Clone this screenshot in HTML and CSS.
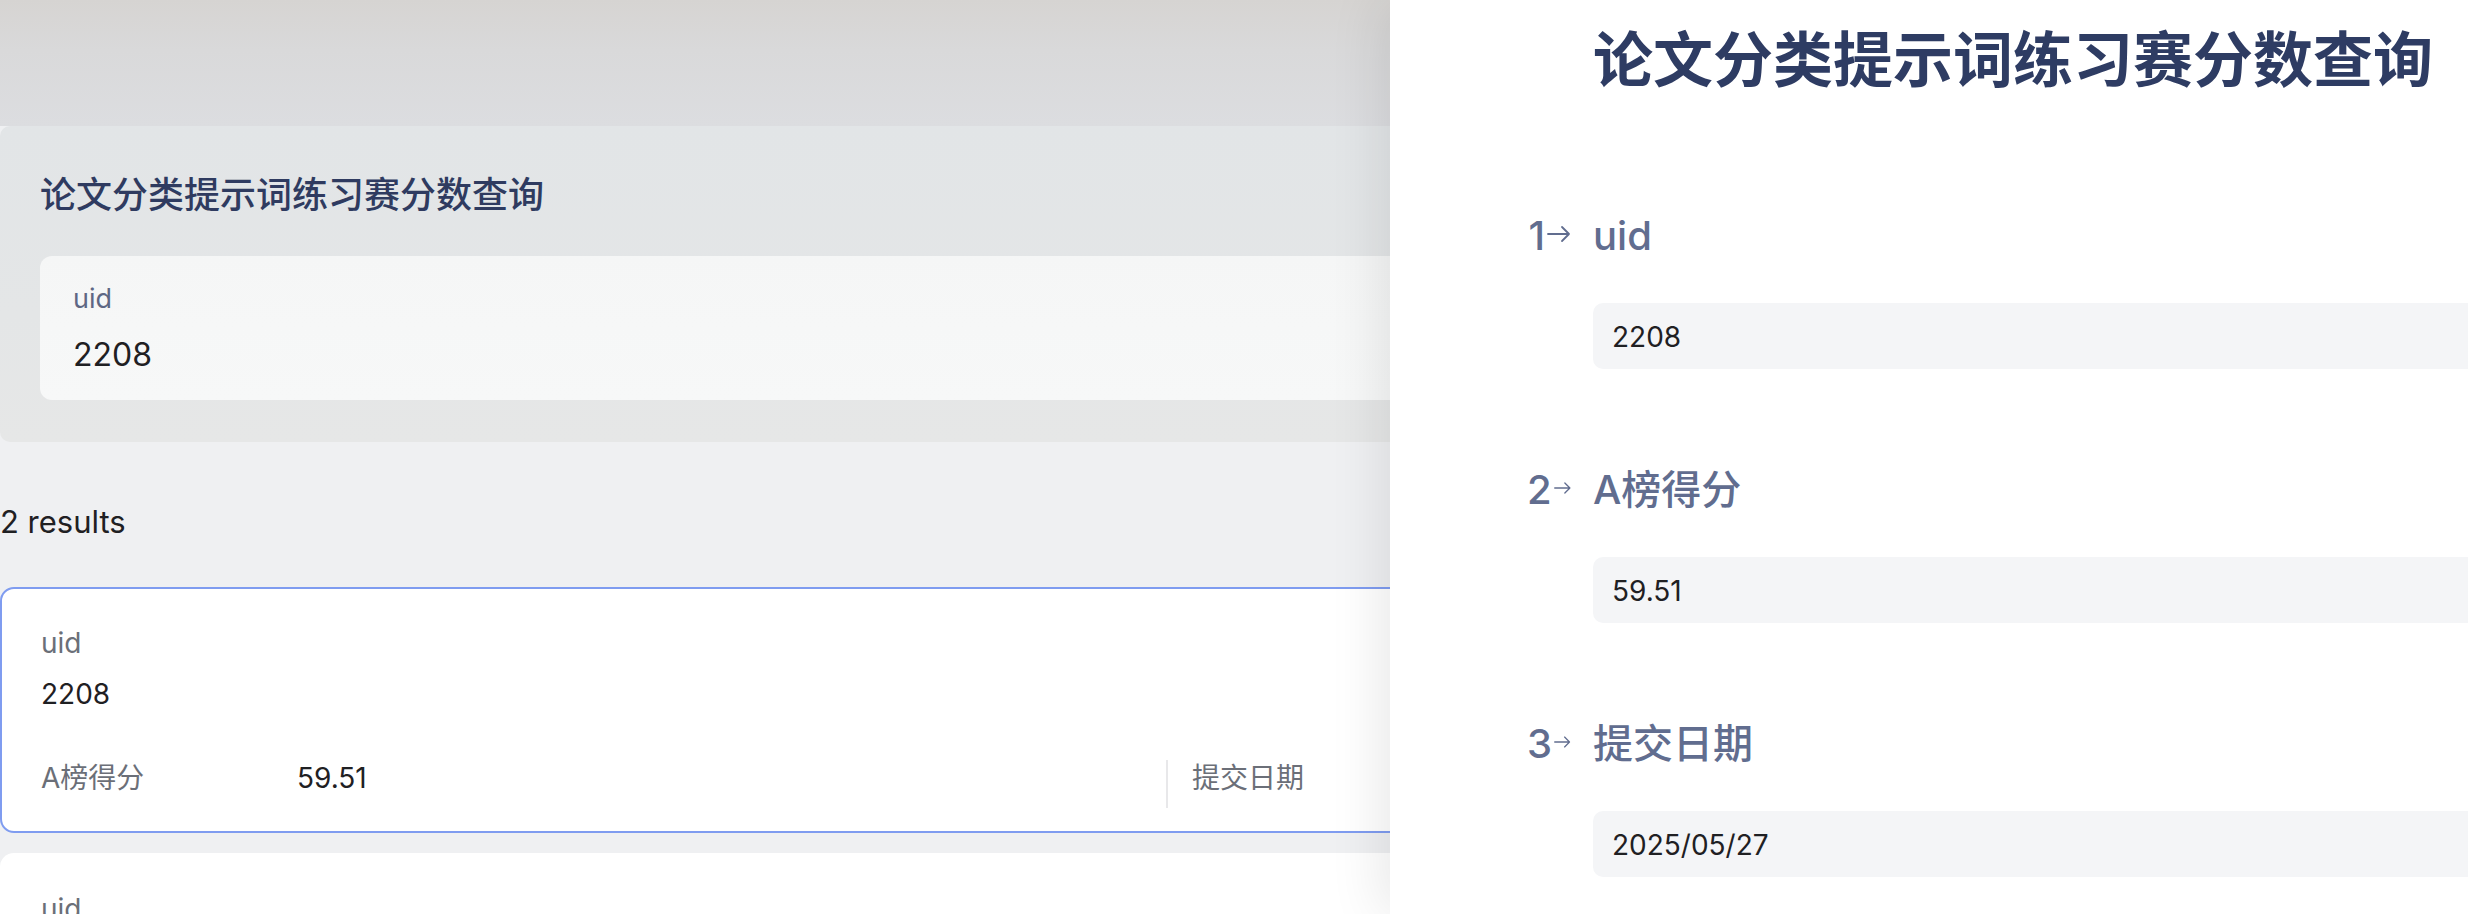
FILE: index.html
```html
<!DOCTYPE html>
<html lang="zh-CN">
<head>
<meta charset="utf-8">
<title>论文分类提示词练习赛分数查询</title>
<link rel="stylesheet" href="styles.css">
</head>
<body>
  <main class="page">
    <div class="hero"></div>
    <section class="search-card">
      <h1 class="search-title">论文分类提示词练习赛分数查询</h1>
      <div class="search-field">
        <div class="search-label">uid</div>
        <div class="search-value">2208</div>
      </div>
    </section>
    <div class="results-count">2 results</div>
    <div class="results">
      <article class="result-card is-active">
        <div class="rc-label">uid</div>
        <div class="rc-value">2208</div>
        <div class="rc-row">
          <div class="rc-cell">
            <span class="rc-cell-label">A榜得分</span>
            <span class="rc-cell-value">59.51</span>
          </div>
          <div class="rc-cell rc-cell-divided">
            <span class="rc-cell-label">提交日期</span>
          </div>
        </div>
      </article>
      <article class="result-card">
        <div class="rc-label">uid</div>
        <div class="rc-value">2208</div>
      </article>
    </div>
  </main>

  <aside class="drawer">
    <h2 class="drawer-title">论文分类提示词练习赛分数查询</h2>
    <div class="field">
      <div class="marker"><span class="marker-num">1</span><svg class="marker-arrow" viewBox="0 0 24 18" width="24" height="18"><path d="M1 9H22M15 2L22 9L15 16" fill="none" stroke="currentColor" stroke-width="1.8" stroke-linecap="round" stroke-linejoin="round"/></svg></div>
      <div class="field-label">uid</div>
      <div class="field-input">2208</div>
    </div>
    <div class="field">
      <div class="marker"><span class="marker-num">2</span><svg class="marker-arrow" viewBox="0 0 24 18" width="24" height="18"><path d="M1 9H22M15 2L22 9L15 16" fill="none" stroke="currentColor" stroke-width="1.8" stroke-linecap="round" stroke-linejoin="round"/></svg></div>
      <div class="field-label">A榜得分</div>
      <div class="field-input">59.51</div>
    </div>
    <div class="field">
      <div class="marker"><span class="marker-num">3</span><svg class="marker-arrow" viewBox="0 0 24 18" width="24" height="18"><path d="M1 9H22M15 2L22 9L15 16" fill="none" stroke="currentColor" stroke-width="1.8" stroke-linecap="round" stroke-linejoin="round"/></svg></div>
      <div class="field-label">提交日期</div>
      <div class="field-input">2025/05/27</div>
    </div>
  </aside>
</body>
</html>
```

FILE: styles.css
```css
html, body {
  margin: 0;
  padding: 0;
  height: 914px;
  overflow: hidden;
}

body {
  position: relative;
  background: #eff0f2;
  font-family: "Inter", "Noto Sans CJK SC", sans-serif;
  color: #1f2023;
}

.page {
  width: 2400px;
  display: flex;
  flex-direction: column;
}

.hero {
  height: 126px;
  background: linear-gradient(180deg, #d6d4d2 0%, #d9d9da 40%, #dcdde0 100%);
}

.search-card {
  padding: 40px 0 42px 40px;
  background: linear-gradient(180deg, #e2e5e7 0%, #e4e6e7 60%, #e6e7e7 100%);
  border-radius: 10px;
}

.search-title {
  margin: 0;
  font-size: 36px;
  line-height: 52px;
  font-weight: 500;
  color: #2f3b60;
  font-family: "Noto Sans CJK SC", sans-serif;
}

.search-field {
  margin-top: 38px;
  height: 144px;
  box-sizing: border-box;
  padding: 25px 33px 0;
  background: linear-gradient(180deg, #f5f6f6 0%, #f7f8f8 100%);
  border-radius: 12px 0 0 12px;
}

.search-label {
  font-size: 27px;
  line-height: 36px;
  color: #5e6784;
}

.search-value {
  margin-top: 16px;
  font-size: 32px;
  line-height: 44px;
  color: #1f2023;
}

.results-count {
  margin-top: 60px;
  font-size: 31px;
  line-height: 40px;
  color: #1f2023;
}

.results {
  margin-top: 45px;
  display: flex;
  flex-direction: column;
  gap: 20px;
}

.result-card {
  border: 2px solid transparent;
  border-radius: 14px;
  background: #ffffff;
  padding: 34px 0 23px 39px;
}

.result-card.is-active {
  border-color: #7f9cf0;
}

.rc-label {
  font-size: 28px;
  line-height: 40px;
  color: #6b6f78;
}

.rc-value {
  margin-top: 11px;
  font-size: 28px;
  line-height: 40px;
  color: #1f2023;
}

.rc-row {
  margin-top: 46px;
  display: grid;
  grid-template-columns: 1125px 1fr;
}

.rc-cell {
  display: flex;
  align-items: flex-start;
  height: 48px;
  font-size: 28px;
  line-height: 36px;
}

.rc-cell-label {
  width: 256px;
  color: #6b6f78;
}

.rc-cell-value {
  color: #1f2023;
}

.rc-cell-divided {
  border-left: 2px solid #e8e8ea;
  padding-left: 24px;
}

.drawer {
  position: absolute;
  top: 0;
  right: 0;
  width: 1078px;
  height: 914px;
  box-sizing: border-box;
  padding: 14px 0 0 137px;
  background: #ffffff;
  box-shadow: -10px 0 50px rgba(0, 0, 0, 0.09);
}

.drawer-title {
  margin: 0 0 0 66px;
  font-family: "Noto Sans CJK SC", sans-serif;
  font-size: 60px;
  line-height: 84px;
  font-weight: 700;
  color: #2e3c63;
  white-space: nowrap;
}

.field {
  display: grid;
  grid-template-columns: 66px 1fr;
  grid-template-rows: 60px 66px;
  row-gap: 37px;
  margin-top: 108px;
}

.field + .field {
  margin-top: 91px;
}

.marker {
  display: flex;
  align-items: center;
  justify-content: flex-end;
  padding-right: 22px;
  gap: 2px;
  color: #616d8f;
  font-size: 40px;
  line-height: 60px;
  font-weight: 500;
}

.marker-arrow {
  display: block;
  transform: translateY(-2px);
}

.field-label {
  font-size: 40px;
  line-height: 60px;
  font-weight: 500;
  color: #616d8f;
}

.field-input {
  grid-column: 2;
  height: 66px;
  box-sizing: border-box;
  padding: 2px 0 0 19px;
  background: #f4f5f7;
  border-radius: 10px 0 0 10px;
  font-size: 28px;
  line-height: 64px;
  color: #1f2023;
}
```
